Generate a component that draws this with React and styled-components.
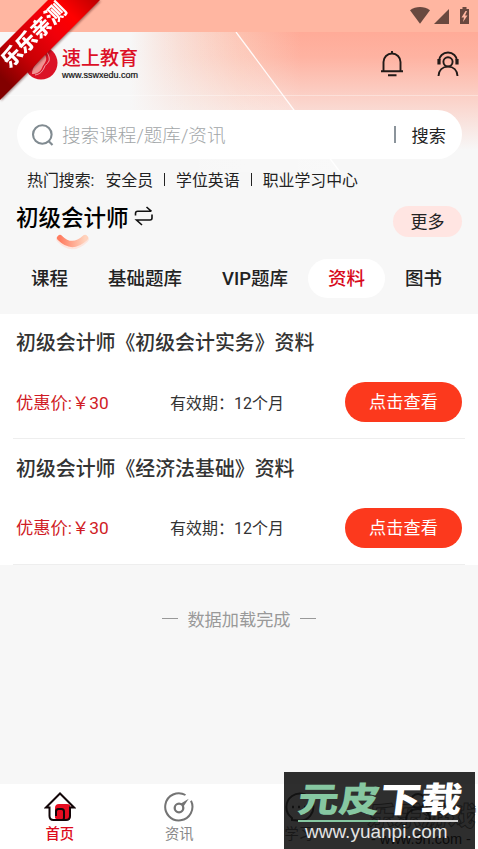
import React, { useState } from "react";
import styled, { createGlobalStyle, css } from "styled-components";

const GlobalStyle = createGlobalStyle`
  * {
    box-sizing: border-box;
  }

  body {
    margin: 0;
    background: #f7f7f7;
    font-family: Roboto, "Noto Sans CJK SC", sans-serif;
    color: #222;
  }
`;

const Page = styled.div`
  position: relative;
  display: flex;
  flex-direction: column;
  width: 478px;
  height: 849px;
  overflow: hidden;
  background: #f7f7f7;
  white-space: nowrap;
`;

const StatusBar = styled.div`
  display: flex;
  justify-content: flex-end;
  flex-shrink: 0;
  height: 32px;
  padding: 6px 7px 0 0;
  background: #ffb6a1;
`;

const Hero = styled.div`
  position: relative;
  height: 282px;
  background:
    linear-gradient(180deg, rgba(247, 247, 247, 0) 0, rgba(247, 247, 247, 0.1) 25px, rgba(247, 247, 247, 0.6) 76px, #f7f7f7 118px),
    linear-gradient(90deg, #f7f7f7 130px, #f9dcd3 180px, #fdc0ae 240px, #ffab98 300px);
`;

const HeroLines = styled.svg`
  position: absolute;
  top: 0;
  left: 0;
`;

const Brand = styled.div`
  position: relative;
  display: flex;
  align-items: flex-start;
  height: 78px;
  padding: 15px 17px 0 24px;
`;

const BrandText = styled.div`
  display: flex;
  flex-direction: column;
  margin-left: 4px;
`;

const BrandName = styled.div`
  font-size: 19px;
  line-height: 23px;
  font-weight: 500;
  color: #dc1026;
`;

const BrandUrl = styled.div`
  font-family: "Liberation Sans", sans-serif;
  font-size: 9px;
  line-height: 10px;
  color: #111;
  -webkit-text-stroke: 0.2px #111;
`;

const BrandActions = styled.div`
  display: flex;
  gap: 32px;
  margin: 3px 1px 0 auto;
`;

const SearchBox = styled.div`
  position: relative;
  display: flex;
  align-items: center;
  height: 49px;
  margin: 0 16px 0 17px;
  padding: 0 16px 0 14px;
  border-radius: 25px;
  background: #fff;
`;

const Placeholder = styled.div`
  flex: 1;
  margin: -2px 0 0 6px;
  font-size: 18.6px;
  font-weight: 300;
  color: #a2a6a8;
`;

const SearchButton = styled.div`
  display: flex;
  align-items: center;
  gap: 16px;
  font-size: 17.2px;

  &::before {
    content: "";
    width: 2px;
    height: 17px;
    background: #8b949b;
  }
`;

const HotRow = styled.div`
  position: relative;
  display: flex;
  align-items: center;
  height: 42px;
  padding: 0 0 2px 27px;
  font-size: 15.9px;
`;

const HotWord = styled.span`
  display: flex;
  align-items: center;
  margin-left: ${({ $first }) => ($first ? "11px" : "0")};

  ${({ $first }) =>
    !$first &&
    css`
      &::before {
        content: "";
        width: 1px;
        height: 13px;
        margin: 0 11px;
        background: #222;
      }
    `}
`;

const SubjectRow = styled.div`
  position: relative;
  display: flex;
  align-items: flex-start;
  height: 58px;
  padding: 5px 16px 0 16px;
`;

const Subject = styled.div`
  font-size: 22.5px;
  line-height: 24px;
  font-weight: 500;
  color: #000;
`;

const Smile = styled.svg`
  position: absolute;
  left: 53px;
  top: 29px;
`;

const More = styled.div`
  width: 69px;
  height: 31px;
  margin-left: auto;
  border-radius: 16px;
  background: #ffe5e2;
  text-align: center;
  font-size: 17px;
  line-height: 32px;
`;

const Tabs = styled.div`
  display: flex;
  height: 39px;
  margin-left: 11px;
`;

const Tab = styled.div`
  padding: 0 20px;
  border-radius: 20px;
  font-size: 18.5px;
  line-height: 40px;
  font-weight: 500;
  cursor: pointer;

  ${({ $active }) =>
    $active &&
    css`
      background: #fff;
      color: #d80b1c;
    `}
`;

const Item = styled.div`
  height: 125.5px;
  padding: 15px 0 0;
  background: #fff;
`;

const ItemTitle = styled.div`
  padding-left: 16px;
  font-size: 19.9px;
  line-height: 30px;
  font-weight: 500;
  color: #333;
`;

const ItemInfo = styled.div`
  display: grid;
  grid-template-columns: 154px 1fr 117px;
  align-items: center;
  height: 40px;
  margin: 23px 16px 0;
`;

const Price = styled.div`
  margin-top: -2px;
  font-size: 17.3px;
  color: #d01b25;
`;

const Validity = styled.div`
  margin-top: -1px;
  font-size: 16px;
  color: #333;
`;

const ViewButton = styled.div`
  height: 40px;
  border-radius: 20px;
  background: #fc391d;
  color: #fff;
  font-size: 17.2px;
  line-height: 41px;
  text-align: center;
`;

const Divider = styled.div`
  height: 1px;
  margin-top: 16px;
  margin-left: 13px;
  margin-right: 13px;
  background: #eee;
`;

const LoadEnd = styled.div`
  display: flex;
  align-items: center;
  justify-content: center;
  gap: 9px;
  height: 107px;
  font-size: 17.2px;
  color: #999;

  &::before,
  &::after {
    content: "";
    width: 16px;
    height: 1px;
    background: #999;
  }
`;

const BottomNav = styled.div`
  display: grid;
  grid-template-columns: repeat(4, 1fr);
  height: 65px;
  margin-top: auto;
  background: #fff;
`;

const NavItem = styled.div`
  display: flex;
  flex-direction: column;
  align-items: center;
  padding-top: 7px;
  font-size: 14.3px;
  line-height: 20px;
  font-weight: ${({ $active }) => ($active ? 500 : 400)};
  color: ${({ $active }) => ($active ? "#dc0a1b" : "#888")};

  svg {
    flex-shrink: 0;
    margin-bottom: 1px;
  }
`;

const Ribbon = styled.div`
  position: absolute;
  top: 0;
  left: 0;
  width: 100px;
  height: 100px;
  filter: drop-shadow(1px 1px 1px rgba(60, 0, 0, 0.45));
`;

const RibbonBand = styled.div`
  width: 100px;
  height: 100px;
  background: linear-gradient(45deg, #820000 12%, #c80005 35%, #f0000a 60%, #f00 78%, #b00 100%);
  clip-path: polygon(48px 0, 100px 0, 0 100px, 0 48px);
`;

const RibbonText = styled.div`
  position: absolute;
  left: -8px;
  top: 20px;
  width: 84px;
  transform: rotate(-45deg);
  text-align: center;
  font-size: 20.5px;
  line-height: 30px;
  font-weight: 900;
  color: #fff;
`;

const Promo = styled.div`
  position: absolute;
  left: 284px;
  top: 772px;
  width: 191px;
  height: 77px;
  background: rgba(0, 0, 0, 0.82);
`;

const PromoName = styled.div`
  position: absolute;
  left: 14px;
  top: 8px;
  font-size: 41px;
  line-height: 41px;
  font-weight: 900;
  color: #fff;
  transform: scaleY(0.84) skewX(-6deg);

  span {
    color: #86c7a1;
  }
`;

const PromoLine = styled.div`
  position: absolute;
  left: 14px;
  top: 48px;
  width: 160px;
  height: 2px;
  background: linear-gradient(90deg, #86c7a1 50%, #d5d5d5 50%);
`;

const PromoUrl = styled.div`
  position: absolute;
  left: 21px;
  top: 49px;
  font-family: "Liberation Sans", sans-serif;
  font-size: 19px;
  line-height: 21px;
  color: #e4e4e4;
`;

const Stamp = styled.div`
  position: absolute;
  left: 368px;
  top: 802px;
  font-size: 27px;
  line-height: 30px;
  font-weight: 900;
  color: rgba(120, 120, 120, 0.15);
  -webkit-text-stroke: 1px rgba(60, 60, 60, 0.6);
  transform: skewX(-6deg);
`;

const StampUrl = styled.div`
  position: absolute;
  left: 371px;
  top: 831px;
  font-family: "Liberation Sans", sans-serif;
  font-size: 14.5px;
  line-height: 16px;
  color: #444;
`;

const StatusIcons = () => (
  <svg width="62" height="20" viewBox="0 0 62 20" fill="#69483f">
    <path d="M1 4.2C6.8-.1 15.2-.1 21 4.2L11 17.7z" />
    <path d="M40 3v15H25z" />
    <path fillRule="evenodd" d="M53.5 1h4v2H60v15h-9V3h2.5zM56.5 5l-4 6.5h2.5L54 16l4.5-6.5H56L58 5z" />
  </svg>
);

const LogoMark = () => (
  <svg width="34" height="34" viewBox="0 0 34 34">
    <circle cx="17" cy="16" r="16.5" fill="#db1226" />
    <path d="M20 2c-3 3-1 6-3 9-3 5-9 8-9 16 5 0 8-2 10-6 2-5 5-6 4-11-1-3-2-5-2-8z" fill="#f3a9a4" opacity=".85" />
    <path d="M21 2c3 5 5 8 4 12-1 3-4 3-5 7-2 4-4 6-9 7" fill="none" stroke="#fff" strokeWidth="1" opacity=".6" />
  </svg>
);

const BellIcon = () => (
  <svg width="24" height="28" viewBox="0 0 24 28" fill="none" stroke="#211a18" strokeWidth="1.9">
    <path d="M3.500 20.500V12a8.500 8.500 0 0 1 17 0v8.500M1 21.300h22M8 25.300h8.500M12 1v3" />
  </svg>
);

const ServiceIcon = () => (
  <svg width="24" height="28" viewBox="0 0 24 28" fill="none" stroke="#211a18" strokeWidth="1.9">
    <path d="M3 12v-1a9 8.500 0 0 1 18 0v1" />
    <path d="M3 9v5.500M21 9v5.500" strokeWidth="3.200" />
    <circle cx="12" cy="11.800" r="4.600" />
    <path d="M2.500 26c.3-5.800 4-9.400 9.500-9.400s9.200 3.600 9.500 9.400" />
  </svg>
);

const SearchIcon = () => (
  <svg width="25" height="24" viewBox="0 0 25 24" fill="none" stroke="#818b91" strokeWidth="2.1">
    <circle cx="11.300" cy="11.500" r="9.300" />
    <path d="M17.500 18l4 4" />
  </svg>
);

const SwitchSvg = styled.svg`
  margin-left: 5px;
`;

const SwitchIcon = () => (
  <SwitchSvg width="20" height="22" viewBox="0 0 20 22" fill="none" stroke="#111" strokeWidth="1.6">
    <path d="M1.500 9.500V7.500Q1.500 5.300 3.700 5.300h13.500M12.500 1l5 4.300M18 8.500v3.500q0 2-2 2H2.500l5.500 5" />
  </SwitchSvg>
);

const HomeIcon = () => (
  <svg width="32" height="32" viewBox="0 0 32 32" fill="none" stroke="#120608" strokeWidth="2">
    <path d="M11 27V17q0-4 4-4h8q3.500 0 3.500 3v9q0 4-3 4H13z" fill="#e60c20" stroke="none" />
    <path d="M2 16.500L16 2.500l14 14h-4v8.500q0 4-4 4H9.500q-4 0-4-4V16.500z" />
    <path d="M12 25v-4.500q0-2.500 2.500-2.500h3q2.500 0 2.500 2.500V27q0 1-1 1.500" />
  </svg>
);

const NewsIcon = () => (
  <svg width="32" height="32" viewBox="0 0 32 32" fill="none" stroke="#747474" strokeWidth="2">
    <path d="M22.500 4A13.600 13.600 0 1 0 28 9.800" />
    <circle cx="16" cy="17" r="4.300" strokeWidth="2.300" />
    <path d="M17.500 12.800l8.200-5-5.200 7.700z" fill="#747474" stroke="none" />
  </svg>
);

const ChatIcon = () => (
  <svg width="32" height="32" viewBox="0 0 32 32" fill="none" stroke="#666" strokeWidth="2">
    <path d="M9 27A13.500 13.500 0 1 1 16 29.500L9 29z" />
    <path d="M9 16h2M15 16h2M21 16h2" strokeWidth="2.500" />
  </svg>
);

const UserIcon = () => (
  <svg width="32" height="32" viewBox="0 0 32 32" fill="none" stroke="#666" strokeWidth="2">
    <circle cx="16" cy="10" r="7" />
    <path d="M4 29c0-7 5-11 12-11s12 4 12 11" />
  </svg>
);

const tabs = ["课程", "基础题库", "VIP题库", "资料", "图书"];
const hotWords = ["安全员", "学位英语", "职业学习中心"];
const items = [
  { title: "初级会计师《初级会计实务》资料", price: 30, months: 12 },
  { title: "初级会计师《经济法基础》资料", price: 30, months: 12 },
];
const navs = [
  { name: "首页", Icon: HomeIcon },
  { name: "资讯", Icon: NewsIcon },
  { name: "学习", Icon: ChatIcon },
  { name: "", Icon: UserIcon },
];

const App = () => {
  const [activeTab, setActiveTab] = useState("资料");

  return (
    <>
      <GlobalStyle />
      <Page>
        <StatusBar>
          <StatusIcons />
        </StatusBar>
        <Hero>
          <HeroLines width="478" height="150" viewBox="0 0 478 150">
            <defs>
              <linearGradient id="sheen" x1="0" x2="1" y1="0" y2="0">
                <stop offset="0" stopColor="#fff" stopOpacity="0" />
                <stop offset="1" stopColor="#fff" stopOpacity=".24" />
              </linearGradient>
            </defs>
            <path d="M150 0h86l104 140H150z" fill="url(#sheen)" />
            <path d="M236 0l104 140" stroke="#fff" strokeOpacity=".9" strokeWidth="1.300" />
            <path d="M0 63.500h478" stroke="#fff" strokeOpacity=".35" />
          </HeroLines>
          <Brand>
            <LogoMark />
            <BrandText>
              <BrandName>速上教育</BrandName>
              <BrandUrl>www.sswxedu.com</BrandUrl>
            </BrandText>
            <BrandActions>
              <BellIcon />
              <ServiceIcon />
            </BrandActions>
          </Brand>
          <SearchBox>
            <SearchIcon />
            <Placeholder>搜索课程/题库/资讯</Placeholder>
            <SearchButton>搜索</SearchButton>
          </SearchBox>
          <HotRow>
            热门搜索:
            {hotWords.map((word, index) => (
              <HotWord key={word} $first={index === 0}>
                {word}
              </HotWord>
            ))}
          </HotRow>
          <SubjectRow>
            <Subject>初级会计师</Subject>
            <SwitchIcon />
            <Smile width="38" height="22" viewBox="0 0 38 22">
              <defs>
                <linearGradient id="smile">
                  <stop offset="0" stopColor="#ff7d61" />
                  <stop offset="1" stopColor="#ffd3bd" />
                </linearGradient>
              </defs>
              <path d="M7 9q12 13 25 0" fill="none" stroke="#ffddd3" strokeWidth="7.500" strokeLinecap="round" opacity=".7" />
              <path d="M7 8q12 12 25 0" fill="none" stroke="url(#smile)" strokeWidth="6" strokeLinecap="round" />
            </Smile>
            <More>更多</More>
          </SubjectRow>
          <Tabs>
            {tabs.map((tab) => (
              <Tab key={tab} $active={tab === activeTab} onClick={() => setActiveTab(tab)}>
                {tab}
              </Tab>
            ))}
          </Tabs>
        </Hero>
        {items.map((item) => (
          <Item key={item.title}>
            <ItemTitle>{item.title}</ItemTitle>
            <ItemInfo>
              <Price>优惠价:￥{item.price}</Price>
              <Validity>有效期：{item.months}个月</Validity>
              <ViewButton>点击查看</ViewButton>
            </ItemInfo>
            <Divider />
          </Item>
        ))}
        <LoadEnd>数据加载完成</LoadEnd>
        <BottomNav>
          {navs.map(({ name, Icon }, index) => (
            <NavItem key={index} $active={index === 0}>
              <Icon />
              {name}
            </NavItem>
          ))}
        </BottomNav>

        <Ribbon>
          <RibbonBand />
          <RibbonText>乐乐亲测</RibbonText>
        </Ribbon>
        <Stamp>乐乐游戏</Stamp>
        <StampUrl>- www.9h.com -</StampUrl>
        <Promo>
          <PromoName>
            <span>元皮</span>下载
          </PromoName>
          <PromoLine />
          <PromoUrl>www.yuanpi.com</PromoUrl>
        </Promo>
      </Page>
    </>
  );
};

export default App;
